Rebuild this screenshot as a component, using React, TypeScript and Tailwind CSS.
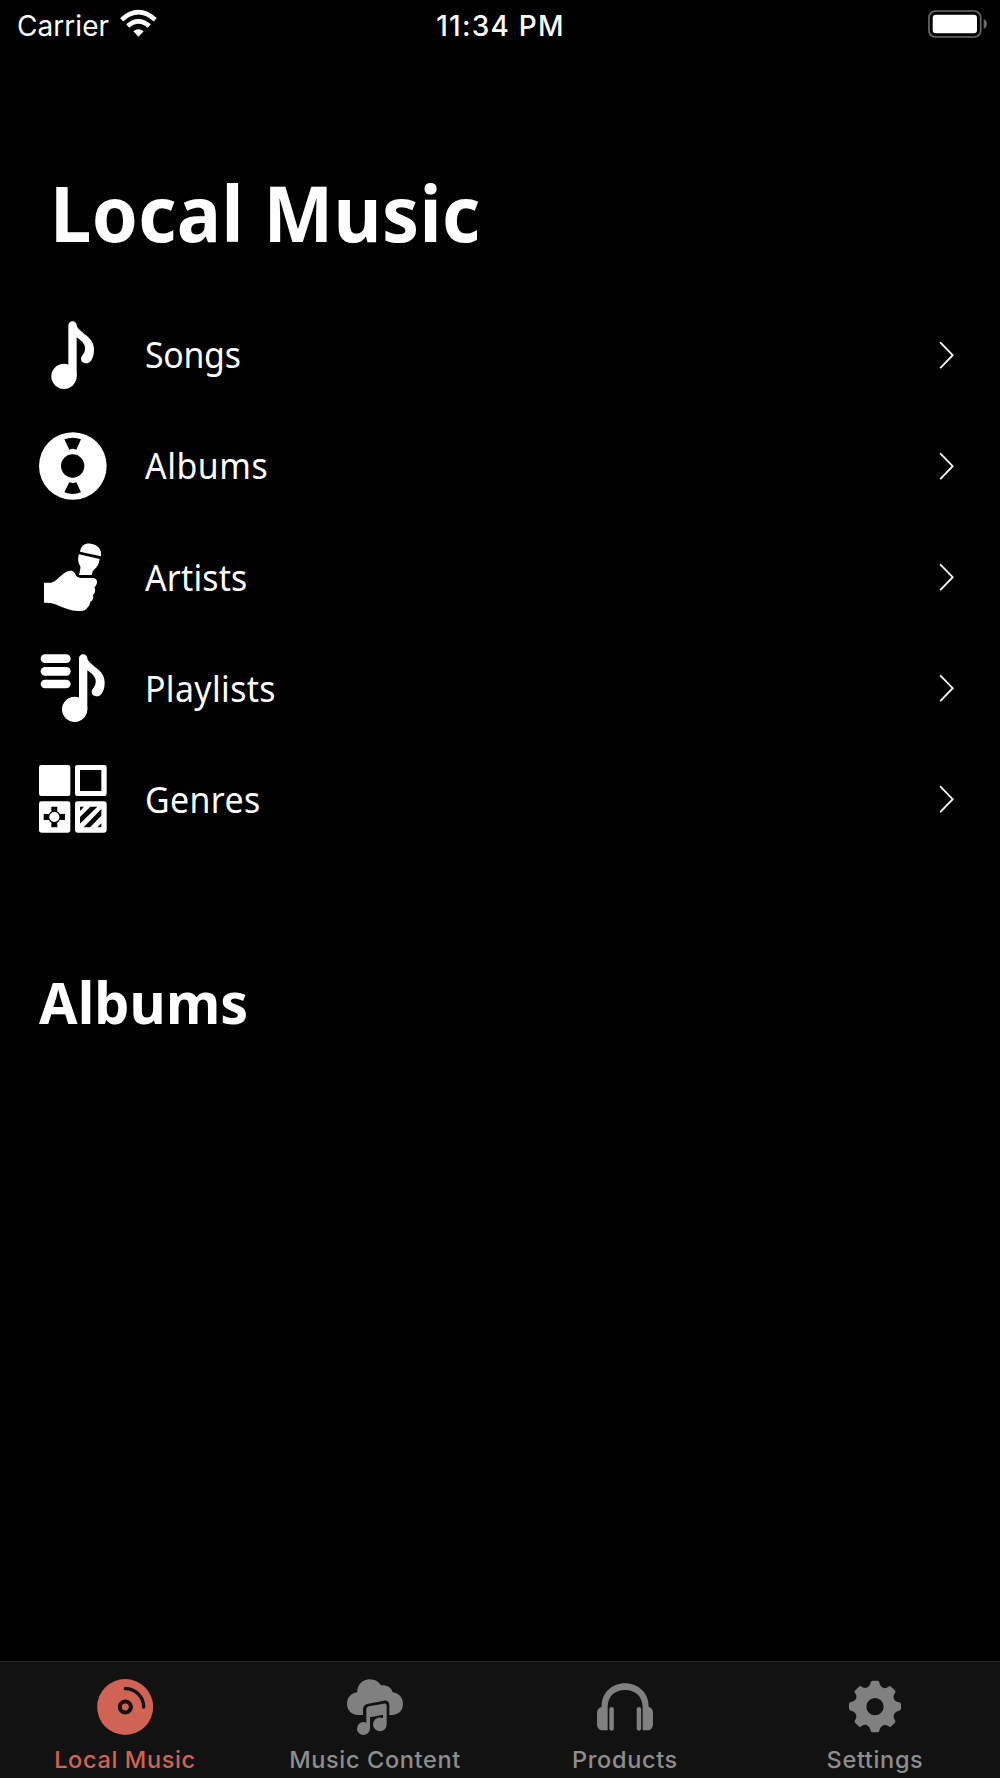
import type { ReactNode } from "react";

function NoteGlyph() {
  return (
    <>
      <circle cx="132" cy="229" r="38" />
      <path d="M145 76a12.500 12.500 0 0 1 25 0c1 9 15 19 28 30c16 13 24 25 24 43c0 15-4 25-8 32c-4 7-10 10-17 9c-11-1-16-10-13-18c2-5 6-8 9-15c6-16 1-29-23-45V229H145z" />
    </>
  );
}

function SongsIcon() {
  return (
    <svg viewBox="57 63 204 204" className="size-[68px] fill-white">
      <NoteGlyph />
    </svg>
  );
}

function AlbumsIcon() {
  return (
    <svg viewBox="57 397 204 204" className="size-[68px] fill-white">
      <path
        fillRule="evenodd"
        d="M57 499a101.500 101.500 0 0 1 203 0a101.500 101.500 0 0 1-203 0zM123 499a35 35 0 0 0 70 0a35 35 0 0 0-70 0zM133 419Q158 410 183 419L169 450Q158 445 148 450zM133 578Q158 588 183 578L169 548Q158 552 148 548z"
      />
    </svg>
  );
}

function ArtistsIcon() {
  return (
    <svg viewBox="57 69 204 204" className="size-[68px] fill-white">
      <path d="M180 95C183 76 196 69 212 71C233 73 246 88 243 109z" />
      <path d="M177 103L239 117C237 132 232 142 221 150C218 155 216 158 215 165H177C179 156 182 147 181 139C175 130 172 117 177 103z" />
      <path d="M72 188H94C113 183 124 159 146 153C159 149 164 157 169 168C173 173 180 174 188 174H220C230 175 234 185 229 194C227 199 224 201 223 202C227 210 226 219 219 225C221 235 218 242 211 245C210 252 208 257 203 262C199 271 191 273 180 273C151 274 124 260 103 252C92 248 83 249 72 248z" />
    </svg>
  );
}

function PlaylistsIcon() {
  return (
    <svg viewBox="57 403 204 204" className="size-[68px] fill-white">
      <rect x="62" y="404" width="90" height="26" rx="13" />
      <rect x="62" y="442" width="90" height="26" rx="13" />
      <rect x="62" y="480" width="90" height="26" rx="13" />
      <g transform="translate(32 340)">
        <NoteGlyph />
      </g>
    </svg>
  );
}

function GenresIcon() {
  return (
    <svg viewBox="57 738 204 204" className="size-[68px] fill-white">
      <rect x="57" y="738" width="94" height="93" rx="7" />
      <path fillRule="evenodd" d="M172 738H253a7 7 0 0 1 7 7V824a7 7 0 0 1-7 7H172a7 7 0 0 1-7-7V745a7 7 0 0 1 7-7zM180 753V816H244V753z" />
      <rect x="57" y="847" width="94" height="94" rx="7" />
      <path className="fill-black" d="M94 863H112V871L111 882H95L94 871zM94 925H112V917L111 906H95L94 917zM71 885H79L91 886V902L79 903H71zM135 885H127L115 886V902L127 903H135z" />
      <circle cx="103" cy="894" r="17" className="stroke-black" strokeWidth="3.500" />
      <rect x="165" y="847" width="95" height="94" rx="7" />
      <path
        className="fill-black"
        d="M180 863H192L180 876zM211 863H232L180 914V894zM244 870V890L210 925H191zM244 913V925H232z"
      />
    </svg>
  );
}

function Chevron() {
  return (
    <svg viewBox="0 0 16 28" className="h-7 w-4 fill-none stroke-[#f4f4f4]" strokeWidth="1.9" strokeLinecap="round">
      <path d="M1.700 1.800L13.700 14.200L1.700 26.600" />
    </svg>
  );
}

function DiscIcon() {
  return (
    <svg viewBox="288 83 174 174" className="size-[58px]">
      <circle cx="375.500" cy="170" r="84" className="fill-[#d06354]" />
      <g className="fill-none stroke-[#121212]">
        <circle cx="376" cy="170" r="16.500" strokeWidth="12.500" />
        <path d="M376 115A55 55 0 0 1 431 170" strokeWidth="10" strokeLinecap="round" />
      </g>
    </svg>
  );
}

function CloudMusicIcon() {
  return (
    <svg viewBox="1038 83 174 174" className="size-[58px] fill-[#808080]">
      <path d="M1071 126C1073 102 1088 87 1109 87C1124 87 1136 93 1143 105C1162 104 1174 112 1178 126C1197 129 1209 142 1209 161C1209 182 1193 194 1176 194H1168V165C1168 154 1161 149 1152 151L1104 160C1094 162 1089 168 1089 177V194H1074C1054 193 1041 179 1041 160C1041 142 1054 128 1071 126z" />
      <path d="M1099 178C1099 172 1102 169 1107 168L1151 160C1157 159 1160 162 1160 168V223A20.500 20.500 0 1 1 1149 204V193L1110 201V234A19.500 19.500 0 1 1 1099 217z" />
    </svg>
  );
}

function HeadphonesIcon() {
  return (
    <svg viewBox="288 83 174 174" className="size-[58px] fill-[#808080]">
      <path d="M305 169C304 129 335 99 375 99S447 129 446 169C455 172 459 178 459 187V220C459 233 452 240 440 240H428V170C427 139 407 119 375 119S323 139 323 170V240H310C298 240 291 233 291 220V187C291 178 296 172 305 169z" />
      <rect x="328" y="170" width="13.500" height="71" rx="6.500" />
      <rect x="410" y="170" width="13.500" height="71" rx="6.500" />
    </svg>
  );
}

function GearIcon() {
  return (
    <svg viewBox="1038 83 174 174" className="size-[58px] fill-[#808080]">
      <path
        fillRule="evenodd"
        d="M1112 96Q1113 91 1118 91H1132Q1137 91 1138 96C1140 109 1150 119 1165 110Q1169 105 1173 109L1184 120Q1189 124 1185 128C1177 137 1180 154 1195 155Q1203 156 1203 161V175Q1203 180 1197 181C1183 183 1177 197 1184 208Q1189 213 1185 217L1174 228Q1170 232 1166 228C1152 218 1141 228 1138 241Q1137 246 1132 246H1118Q1113 246 1112 241C1109 228 1098 218 1085 227Q1080 232 1076 228L1065 217Q1061 213 1066 208C1074 197 1067 183 1053 181Q1047 180 1047 175V161Q1047 156 1053 155C1069 153 1074 138 1065 128Q1061 124 1066 120L1077 109Q1081 105 1086 110C1099 118 1110 109 1112 96zM1099 169a26 26 0 0 0 52 0a26 26 0 0 0-52 0z"
      />
    </svg>
  );
}

function StatusBar() {
  return (
    <header className="flex h-[50px] items-start justify-between font-[Inter,sans-serif] text-white">
      <div className="flex w-[300px] pl-[17px]">
        <span className="mt-[6px] w-[103px] text-[28px] leading-10 tracking-[0.050px]">Carrier</span>
        <svg viewBox="360 28 112 84" className="mt-[9.300px] h-7 w-[37.300px] fill-none stroke-white" strokeWidth="14">
          <path d="M365 60Q415 15 466 60" />
          <path d="M383 79Q415 51 448 79" />
          <path d="M400 95Q415 82 431 95L415.500 111z" className="fill-white stroke-none" />
        </svg>
      </div>
      <span className="mt-[6px] pl-px text-[28px] leading-10 font-medium tracking-[1.250px] whitespace-nowrap">11:34 PM</span>
      <div className="flex w-[300px] justify-end pr-3">
        <svg viewBox="84 30 180 84" className="mt-[10px] h-7 w-[60px]">
          <rect x="87" y="33" width="155" height="78" rx="19" className="fill-none stroke-[#6b6b6b]" strokeWidth="5" />
          <rect x="98" y="44" width="133" height="56" rx="10" className="fill-white" />
          <path d="M251 57C264 61 264 82 251 87z" className="fill-[#6b6b6b]" />
        </svg>
      </div>
    </header>
  );
}

const rows: { label: string; icon: ReactNode; tracking: string }[] = [
  { label: "Songs", icon: <SongsIcon />, tracking: "tracking-[-0.300px]" },
  { label: "Albums", icon: <AlbumsIcon />, tracking: "tracking-[0.600px]" },
  { label: "Artists", icon: <ArtistsIcon />, tracking: "tracking-[0.200px]" },
  { label: "Playlists", icon: <PlaylistsIcon />, tracking: "tracking-[0.400px]" },
  { label: "Genres", icon: <GenresIcon />, tracking: "tracking-[0.400px]" },
];

const tabs: { label: string; icon: ReactNode; color: string }[] = [
  { label: "Local Music", icon: <DiscIcon />, color: "text-[#d06354]" },
  { label: "Music Content", icon: <CloudMusicIcon />, color: "text-[#8e8e8e]" },
  { label: "Products", icon: <HeadphonesIcon />, color: "text-[#8e8e8e]" },
  { label: "Settings", icon: <GearIcon />, color: "text-[#8e8e8e]" },
];

export default function App() {
  return (
    <div className="flex h-[1778px] w-[1000px] flex-col overflow-hidden bg-black">
      <StatusBar />
      <main className="flex-1 font-['Noto_Sans',sans-serif] text-white">
        <h1 className="mt-[109px] ml-[50px] w-max origin-left scale-x-[0.96] text-[77px] leading-[108px] font-bold tracking-[0.400px]">
          Local Music
        </h1>
        <ul className="mt-[32.200px]">
          {rows.map((row) => (
            <li key={row.label} className="flex h-[111.150px] items-center pr-[45px] pl-[38.600px]">
              {row.icon}
              <span className={`mt-px ml-[38.400px] origin-left scale-x-[0.94] text-[36px] leading-[48px] ${row.tracking}`}>
                {row.label}
              </span>
              <span className="ml-auto">
                <Chevron />
              </span>
            </li>
          ))}
        </ul>
        <h2 className="mt-[107.500px] ml-[39px] w-max origin-left scale-x-[0.96] text-[58px] leading-[80px] font-bold tracking-[0.100px]">
          Albums
        </h2>
      </main>
      <nav className="grid h-[117px] grid-cols-4 border-t border-[#262626] bg-[#121212] font-[Inter,sans-serif]">
        {tabs.map((tab) => (
          <div key={tab.label} className={`flex flex-col items-center pt-[15.700px] ${tab.color}`}>
            {tab.icon}
            <span className="mt-[10px] text-[23.500px] leading-7 font-[450] tracking-[0.650px] whitespace-nowrap">
              {tab.label}
            </span>
          </div>
        ))}
      </nav>
    </div>
  );
}
